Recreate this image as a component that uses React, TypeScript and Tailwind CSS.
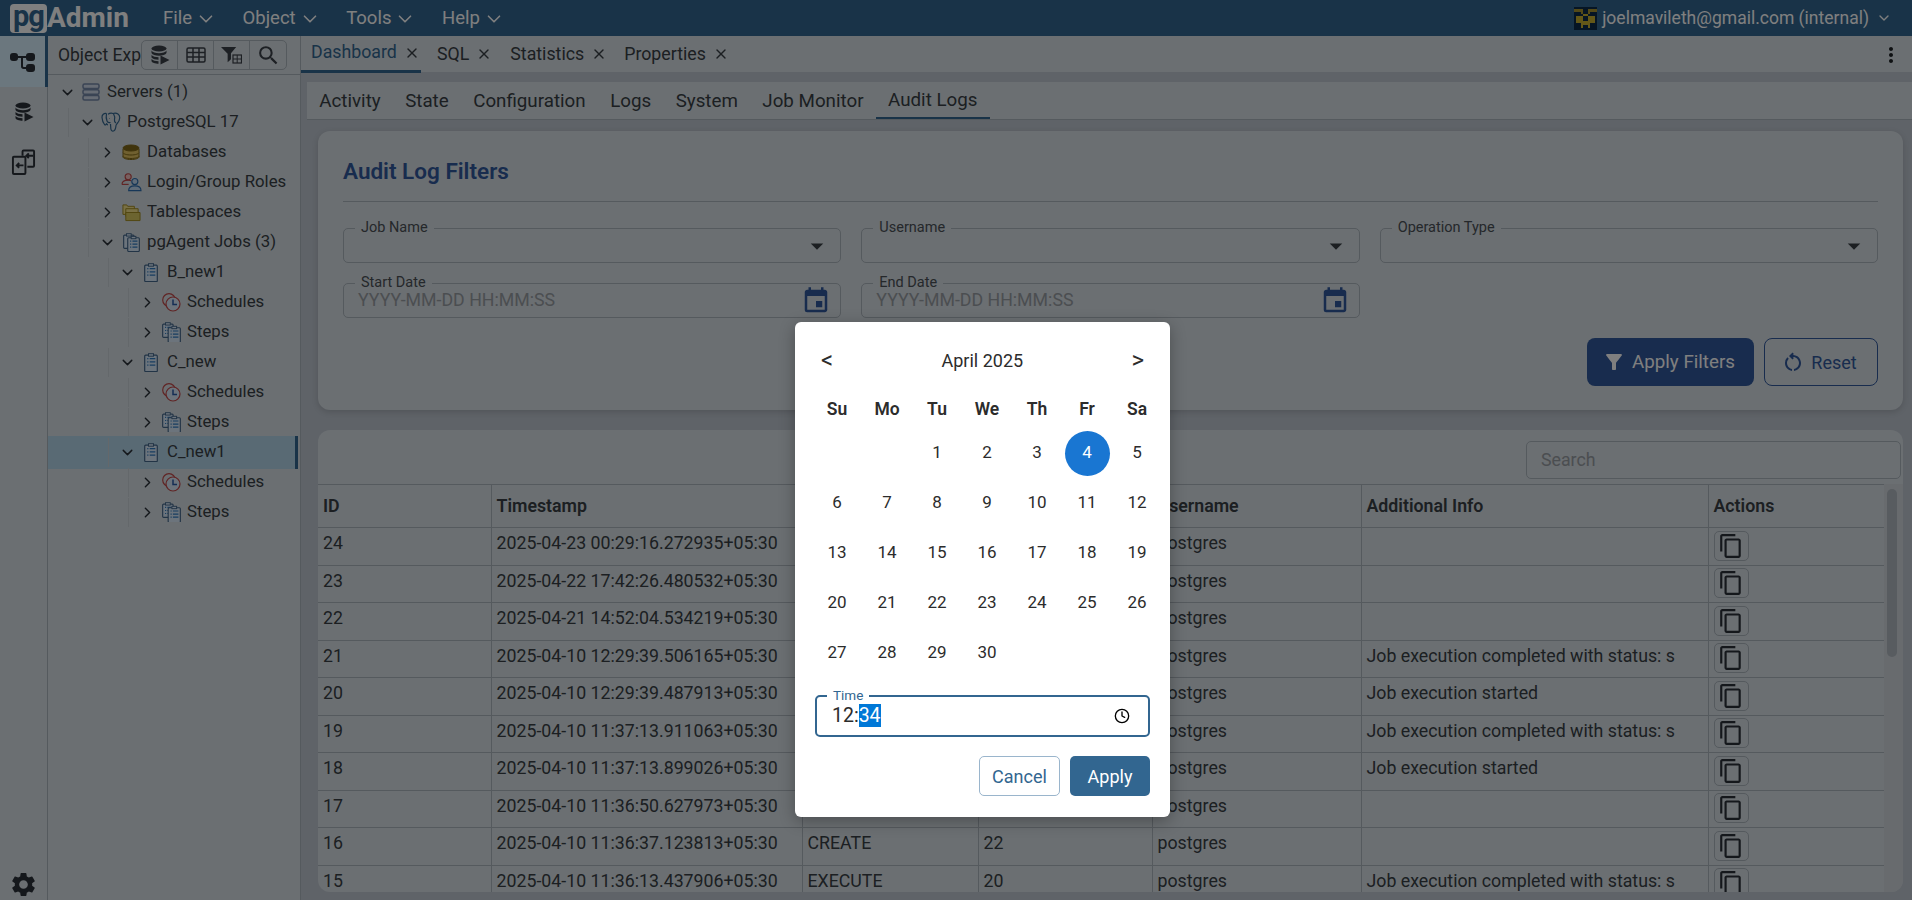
import React from "react";
import { X, ChevronDown, ChevronRight, Clock } from "lucide-react";
import { MdContentCopy, MdEvent, MdFilterAlt, MdArrowDropDown, MdSettings, MdMoreVert, MdSearch, MdOutlineRestartAlt } from "react-icons/md";

const DbPlay = ({ className = "" }: { className?: string }) => (
  <svg viewBox="0 0 20 20" className={className} fill="currentColor">
    <ellipse cx="9" cy="3.5" rx="7.5" ry="3" />
    <path d="M1.5 5.5c1 2 4 2.7 7.5 2.7s6.500-.7 7.500-2.700V8c-1 1.800-4 2.700-7.500 2.700S2.500 9.800 1.500 8z" />
    <path d="M1.500 10c1.500 1.500 4 2.200 7 2.200v2.500c-3 0-5.500-.7-7-2.200zM1.500 14c1.500 1.500 4 2.200 7 2.200v2.500c-3 0-7-1-7-2.700z" />
    <path d="M10.500 10.500l9 4.500-9 4.500z" />
  </svg>
);
const TreeRail = () => (
  <svg viewBox="0 0 26 24" className="w-[26px] h-[24px]" fill="currentColor">
    <rect x="0" y="3" width="8" height="8" rx="3" />
    <rect x="16" y="3" width="9" height="8" rx="3" />
    <rect x="16" y="14" width="9" height="8" rx="3" />
    <path d="M7 6h10v2H13v8c0 .6.400 1 1 1h3v2h-3.500c-1.500 0-2.500-1-2.500-2.500V8H7z" />
  </svg>
);
const CompareRail = () => (
  <svg viewBox="0 0 26 28" className="w-[25px] h-[27px]" fill="none" stroke="currentColor" strokeWidth="2">
    <path d="M12 7V2.500c0-.6.400-1 1-1h10c.6 0 1 .4 1 1v15c0 .6-.4 1-1 1h-6" />
    <rect x="2" y="8" width="13" height="18" rx="1" />
    <path d="M23 7h-7M18.500 4.500L16 7l2.500 2.500M13 17H6M8.500 14.500L6 17l2.500 2.500" />
  </svg>
);
const ServersIcon = () => (
  <svg viewBox="0 0 18 18" className="w-[18px] h-[18px]" fill="none" stroke="#7488a8" strokeWidth="1.500">
    <rect x="1" y="1" width="16" height="4.500" rx="1.500" fill="#cfd8e8" />
    <rect x="1" y="6.800" width="16" height="4.500" rx="1.500" fill="#cfd8e8" />
    <rect x="1" y="12.500" width="16" height="4.500" rx="1.500" fill="#cfd8e8" />
  </svg>
);
const Elephant = () => (
  <svg viewBox="0 0 20 20" className="w-[20px] h-[20px]" fill="none" stroke="#336791" strokeWidth="1.200" strokeLinejoin="round">
    <path d="M5.500 1.500C3 1 .8 2.500 1 5.500c.2 2.500 1.300 5.500 2.500 7 1 1 1.800.2 2-1 .3 1 1 1.400 1.500 1.400" />
    <path d="M7 2.200C8.500 1.200 10.500 1 12 1.500 16 .4 19 2.500 18.700 6c-.2 2.500-1.500 4.500-2.500 5.500-.5.500-1 1-1.200 2-.3 2.500-.5 5-2.500 5.500-1.500.3-2.500-.5-2.700-2.500-.1-1.500-.2-3-.3-4.500" />
    <path d="M5.500 1.500C5 4 5 6.500 6 9c.6 1.500 2 2 3.500 1.500M12.500 1.800c1 1.700 1.500 3.700 1 5.700-.3 1.500-.2 2.500 1.500 3.500M8.500 6.500h.5" />
  </svg>
);
const DbIcon = () => (
  <svg viewBox="0 0 18 16" className="w-[18px] h-[16px]" fill="#e0c060" stroke="#806818" strokeWidth="1">
    <path d="M1 12v1c0 1.300 3.500 2.500 8 2.500s8-1.200 8-2.500v-1" />
    <path d="M1 8.500v3.500c0 1.300 3.500 2.500 8 2.500s8-1.200 8-2.500V8.500" />
    <path d="M1 5v3.500c0 1.300 3.500 2.500 8 2.500s8-1.200 8-2.500V5" />
    <ellipse cx="9" cy="4" rx="8" ry="3" fill="#806818" />
  </svg>
);
const RolesIcon = () => (
  <svg viewBox="0 0 22 20" className="w-[21px] h-[19px]" fill="none" strokeWidth="1.200">
    <g stroke="#c04848">
      <circle cx="7.500" cy="4" r="3.200" fill="#f0c0c0" />
      <path d="M1 12c0-3 2-4.500 6.500-4.500 1.500 0 2.500.2 3.300.6" />
      <path d="M1 12h7" />
    </g>
    <g stroke="#2f6fb0">
      <circle cx="14.500" cy="9" r="3.200" fill="#c0d8f0" />
      <path d="M8 18.500c0-3.500 2.500-5 6.500-5s6.500 1.500 6.500 5z" fill="#c0d8f0" />
    </g>
  </svg>
);
const FoldersIcon = () => (
  <svg viewBox="0 0 20 20" className="w-[19px] h-[19px]" fill="#f2e08a" stroke="#a08a20" strokeWidth="1">
    <path d="M1 2h4l1 1.500h7V12H1z" />
    <path d="M4 6h13v8H4z" />
    <path d="M4 10h15v8.500H4z" fill="#d8c860" />
  </svg>
);
const Clip = ({ x = 0, y = 0, w = 12, h = 14, dots = true }: { x?: number; y?: number; w?: number; h?: number; dots?: boolean }) => (
  <g>
    <rect x={x} y={y + 1.500} width={w} height={h} rx="1" fill="#d8e8f8" stroke="#45688c" strokeWidth="1.200" />
    <rect x={x + w / 2 - 2.500} y={y} width="5" height="2.500" fill="#d8e8f8" stroke="#45688c" strokeWidth="1" />
    {dots && [0, 1, 2].map((i) => (
      <path key={i} d={`M${x + 2.500} ${y + 5 + i * 3.200}h1.200M${x + 5} ${y + 5 + i * 3.200}h${w - 7}`} stroke="#2f7ac0" strokeWidth="1.200" />
    ))}
  </g>
);
const JobsIcon = () => (
  <svg viewBox="0 0 18 20" className="w-[17px] h-[19px]">
    <Clip x={0.700} y={0.700} w={11} h={14} dots={false} />
    <Clip x={5} y={3.500} w={12.300} h={14.500} />
  </svg>
);
const JobIcon = () => (
  <svg viewBox="0 0 14 19" className="w-[14px] h-[19px]">
    <Clip x={0.700} y={0.700} w={12.600} h={16.500} />
  </svg>
);
const ScheduleIcon = () => (
  <svg viewBox="0 0 19 19" className="w-[19px] h-[19px]" fill="none">
    <circle cx="7" cy="7" r="6.300" stroke="#c04848" strokeWidth="1.200" />
    <circle cx="11" cy="11" r="7" stroke="#c04848" strokeWidth="1.200" fill="#d8e8f8" />
    <path d="M11 6.500V11.500H15" stroke="#2a5ca8" strokeWidth="1.500" />
  </svg>
);
const StepsIcon = () => (
  <svg viewBox="0 0 20 21" className="w-[19px] h-[20px]">
    <Clip x={0.700} y={0.700} w={11} h={14} />
    <Clip x={6.500} y={4.500} w={12.800} h={15.500} />
  </svg>
);
const TableIcon = () => (
  <svg viewBox="0 0 20 16" className="w-[20px] h-[16px]" fill="none" stroke="#3a4048" strokeWidth="1.500">
    <rect x="1" y="1" width="18" height="14" rx="1.500" />
    <path d="M1 5.500h18M1 10h18M7 1v14M13 1v14" />
  </svg>
);
const FilterTable = () => (
  <svg viewBox="0 0 21 17" className="w-[21px] h-[17px]" fill="#3a4048">
    <path d="M0 0h16l-5.500 6.500V13L7 16V7z" transform="scale(.95)" />
    <rect x="12" y="8" width="8.500" height="8" fill="none" stroke="#3a4048" strokeWidth="1.200" />
    <path d="M12 12h8.500M16.200 8v8" stroke="#3a4048" strokeWidth="1" />
  </svg>
);
const Avatar = () => (
  <svg viewBox="0 0 10 10" className="w-[23px] h-[23px]" shapeRendering="crispEdges">
    <rect width="10" height="10" fill="#0c2a48" />
    <path d="M0 1h3v1H0zM7 1h3v1H7zM3 1h1v2h2V1h1v2H3z" fill="#a89430" />
    <path d="M1 4h3V3h2v1h3v3H7v1H3V7H1zM3 9h1V8H3zM6 9h1V8H6z" fill="#c8b030" />
    <path d="M4 4h2v2H4z" fill="#0c2a48" />
  </svg>
);

const tree: [number, boolean, string, React.ReactNode, string?][] = [
  [0, true, "Servers", <ServersIcon />, "(1)"],
  [1, true, "PostgreSQL 17", <Elephant />],
  [2, false, "Databases", <DbIcon />],
  [2, false, "Login/Group Roles", <RolesIcon />],
  [2, false, "Tablespaces", <FoldersIcon />],
  [2, true, "pgAgent Jobs", <JobsIcon />, "(3)"],
  [3, true, "B_new1", <JobIcon />],
  [4, false, "Schedules", <ScheduleIcon />],
  [4, false, "Steps", <StepsIcon />],
  [3, true, "C_new", <JobIcon />],
  [4, false, "Schedules", <ScheduleIcon />],
  [4, false, "Steps", <StepsIcon />],
  [3, true, "C_new1", <JobIcon />],
  [4, false, "Schedules", <ScheduleIcon />],
  [4, false, "Steps", <StepsIcon />],
];
const indent = ["pl-[7px]", "pl-[27px]", "pl-[47px]", "pl-[67px]", "pl-[87px]"];
const guide = ["hidden", "left-[20px]", "left-[40px]", "left-[60px]", "left-[80px]"];

const rows = [
  ["24", "2025-04-23 00:29:16.272935+05:30", "CREATE", "29", "postgres", ""],
  ["23", "2025-04-22 17:42:26.480532+05:30", "CREATE", "28", "postgres", ""],
  ["22", "2025-04-21 14:52:04.534219+05:30", "CREATE", "27", "postgres", ""],
  ["21", "2025-04-10 12:29:39.506165+05:30", "EXECUTE", "26", "postgres", "Job execution completed with status: s"],
  ["20", "2025-04-10 12:29:39.487913+05:30", "EXECUTE", "26", "postgres", "Job execution started"],
  ["19", "2025-04-10 11:37:13.911063+05:30", "EXECUTE", "25", "postgres", "Job execution completed with status: s"],
  ["18", "2025-04-10 11:37:13.899026+05:30", "EXECUTE", "25", "postgres", "Job execution started"],
  ["17", "2025-04-10 11:36:50.627973+05:30", "CREATE", "23", "postgres", ""],
  ["16", "2025-04-10 11:36:37.123813+05:30", "CREATE", "22", "postgres", ""],
  ["15", "2025-04-10 11:36:13.437906+05:30", "EXECUTE", "20", "postgres", "Job execution completed with status: s"],
];

const Field = ({ label, date }: { label: string; date?: boolean }) => (
  <div className="relative h-[35px] rounded-[5px] border border-[#aab4bc] flex items-center justify-between pl-[14px] pr-[9px]">
    <span className="absolute left-[11px] -top-[9px] px-[6px] bg-[#d6dee4] text-[14.500px] leading-[16px] text-[#4a5056]">{label}</span>
    {date ? (
      <>
        <span className="text-[17.750px] text-[#969ca2]">YYYY-MM-DD HH:MM:SS</span>
        <MdEvent className="w-[30px] h-[30px] text-[#30589c]" />
      </>
    ) : (
      <>
        <span />
        <MdArrowDropDown className="w-[30px] h-[30px] -mr-[1px] text-[#383e44]" />
      </>
    )}
  </div>
);

const weeks = [
  ["", "", 1, 2, 3, 4, 5],
  [6, 7, 8, 9, 10, 11, 12],
  [13, 14, 15, 16, 17, 18, 19],
  [20, 21, 22, 23, 24, 25, 26],
  [27, 28, 29, 30, "", "", ""],
];

export default function App() {
  return (
    <div className="relative h-[900px] w-full overflow-hidden flex flex-col [font-family:Roboto,sans-serif] text-[17.750px] text-[#383e44] bg-[#bec6d0]">
      <header className="h-[36px] shrink-0 bg-[#326690] flex items-center text-white">
        <div className="ml-[10px] w-[120px] flex items-center h-[30px]">
          <span className="h-[29px] w-[37px] rounded-[4px] bg-white text-[#326690] font-bold text-[29px] leading-[24px] text-center tracking-[-1px]">pg</span>
          <span className="font-bold text-[28px] leading-[30px]">Admin</span>
        </div>
        <nav className="flex ml-[33px] mt-[2px] gap-[25.500px] text-[18.500px]">
          {["File", "Object", "Tools", "Help"].map((m) => (
            <span key={m} className="flex items-center gap-[3px]">
              {m}
              <ChevronDown className="w-[22px] h-[22px]" strokeWidth={1.8} />
            </span>
          ))}
        </nav>
        <div className="ml-auto flex items-center pr-[20px] gap-[5px] text-[17.500px]">
          <Avatar />
          <span>joelmavileth@gmail.com (internal)</span>
          <ChevronDown className="w-[16px] h-[16px] ml-[2px]" strokeWidth={2} />
        </div>
      </header>

      <div className="flex-1 flex min-h-0">
        <aside className="w-[48px] shrink-0 bg-[#d6dee4] border-r border-[#aab4bc] flex flex-col text-[#2a3038]">
          <div className="h-[51px] bg-[#d6effc] border-r-[3px] border-[#326690] flex items-center justify-center -mr-px">
            <TreeRail />
          </div>
          <div className="h-[50px] flex items-center justify-center"><DbPlay className="w-[20px] h-[20px]" /></div>
          <div className="h-[50px] flex items-center justify-center"><CompareRail /></div>
          <MdSettings className="mt-auto mb-[1px] mx-auto w-[29px] h-[29px]" />
        </aside>

        <section className="w-[253px] shrink-0 bg-[#d6dee4] border-r border-[#aab4bc] flex flex-col">
          <div className="h-[39px] shrink-0 relative border-b border-[#aab4bc] pl-[10px] flex items-center overflow-hidden text-[17.500px]">
            <span className="whitespace-nowrap">Object Explorer</span>
            <div className="absolute left-[93px] top-[4px] h-[30px] w-[146px] grid grid-cols-4 rounded-[5px] border border-[#aab4bc] bg-[#d6dee4] divide-x divide-[#aab4bc] text-[#3a4048]">
              <span className="flex items-center justify-center"><DbPlay className="w-[20px] h-[20px]" /></span>
              <span className="flex items-center justify-center"><TableIcon /></span>
              <span className="flex items-center justify-center"><FilterTable /></span>
              <span className="flex items-center justify-center"><MdSearch className="w-[25px] h-[25px]" /></span>
            </div>
          </div>
          <div className="flex-1 pt-[2px] text-[16.800px]">
            {tree.map(([d, open, name, icon, extra], i) => (
              <div key={i} className={`relative h-[30px] flex items-center ${indent[d]}`}>
                {name === "C_new1" && <span className="absolute inset-x-0 -top-[1px] h-[33px] bg-[#b2d4e8] border-r-[3px] border-[#326690] mr-[2px]" />}
                <span className={`absolute top-[1px] h-[29px] w-px bg-[#c8d0d6] ${guide[d]}`} />
                <span className="relative w-[24px] flex justify-center shrink-0">
                  {open ? <ChevronDown className="w-[17px] h-[17px] text-[#2a3038]" /> : <ChevronRight className="w-[17px] h-[17px] text-[#2a3038]" />}
                </span>
                <span className="relative w-[24px] flex justify-center shrink-0">{icon}</span>
                <span className="relative ml-[4px] whitespace-nowrap">{name}{extra && <span className="ml-[4px]">{extra}</span>}</span>
              </div>
            ))}
          </div>
        </section>

        <main className="flex-1 min-w-0 flex flex-col">
          <div className="h-[38px] shrink-0 bg-[#d6dee4] border-b-2 border-[#bec6d0] flex items-center relative">
            <div className="flex h-[38px] items-center">
              <div className="w-[120px] h-[38px] border-b-[3px] border-[#326690] flex items-center pl-[10px] text-[#326690]">
                Dashboard<X className="w-[16px] h-[16px] ml-[7px] text-[#383e44]" />
              </div>
              <div className="flex items-center ml-[16px]">SQL<X className="w-[16px] h-[16px] ml-[7px]" /></div>
              <div className="flex items-center ml-[18px]">Statistics<X className="w-[16px] h-[16px] ml-[7px]" /></div>
              <div className="flex items-center ml-[17px]">Properties<X className="w-[16px] h-[16px] ml-[7px]" /></div>
            </div>
            <MdMoreVert className="absolute right-[9px] top-[7px] w-[24px] h-[24px] text-[#1c2024]" />
          </div>

          <div className="flex-1 min-h-0 pl-[6px] pt-[8px] flex flex-col">
            <div className="h-[38px] shrink-0 bg-[#d6dee4] border-b border-[#aab4bc] flex items-stretch text-[18.750px]">
              {["Activity", "State", "Configuration", "Logs", "System", "Job Monitor", "Audit Logs"].map((t) => (
                <div key={t} className={`px-[12.250px] pt-[1px] flex items-center ${t === "Audit Logs" ? "border-b-2 border-[#326690]" : ""}`}>{t}</div>
              ))}
            </div>
            <div className="flex-1 min-h-0 pl-[11px] pr-[9px] pt-[11px] pb-[8px] flex flex-col gap-[20px]">
              <div className="h-[279px] shrink-0 rounded-[12px] bg-[#d6dee4] px-[25px] shadow-[0_2px_6px_rgba(0,0,0,0.15)]">
                <h2 className="h-[71px] border-b border-[#aab4bc] flex items-center pt-[12px] text-[#30589c] text-[22.500px] font-semibold">Audit Log Filters</h2>
                <div className="grid grid-cols-3 gap-x-[20px] gap-y-[20px] mt-[26px]">
                  <Field label="Job Name" />
                  <Field label="Username" />
                  <Field label="Operation Type" />
                  <Field label="Start Date" date />
                  <Field label="End Date" date />
                </div>
                <div className="flex justify-end gap-[10px] mt-[20px]">
                  <button className="w-[167px] h-[48px] rounded-[8px] bg-[#30589c] text-white flex items-center justify-center gap-[6px] pr-[4px] text-[18.750px]">
                    <MdFilterAlt className="w-[24px] h-[24px]" />Apply Filters
                  </button>
                  <button className="w-[114px] h-[48px] rounded-[8px] border border-[#30589c] text-[#30589c] flex items-center justify-center gap-[6px] pr-[4px] text-[18px]">
                    <MdOutlineRestartAlt className="w-[24px] h-[24px]" />Reset
                  </button>
                </div>
              </div>

              <div className="flex-1 min-h-0 rounded-[12px] bg-[#d6dee4] overflow-hidden flex flex-col">
                <div className="h-[54px] shrink-0 flex justify-end items-center pr-[2px] pt-[6px]">
                  <div className="w-[375px] h-[38px] rounded-[5px] border border-[#aab4bc] flex items-center pl-[14px] text-[#969ca2]">Search</div>
                </div>
                <div className="relative flex-1 min-h-0 overflow-hidden">
                  <table className="w-[1566px] table-fixed border-collapse">
                    <colgroup>
                      <col className="w-[173px]" /><col className="w-[311px]" /><col className="w-[176px]" /><col className="w-[174px]" /><col className="w-[209px]" /><col className="w-[347px]" /><col className="w-[176px]" />
                    </colgroup>
                    <thead>
                      <tr className="h-[43px]">
                        {["ID", "Timestamp", "Operation", "Job ID", "Username", "Additional Info", "Actions"].map((h) => (
                          <th key={h} className="border border-[#aab4bc] border-l-0 px-[5px] text-left font-semibold">{h}</th>
                        ))}
                      </tr>
                    </thead>
                    <tbody>
                      {rows.map((r) => (
                        <tr key={r[0]} className="h-[37.500px]">
                          {r.map((c, i) => (
                            <td key={i} className="border border-[#aab4bc] border-l-0 px-[5px] pb-[5px] whitespace-nowrap overflow-hidden">{c}</td>
                          ))}
                          <td className="border border-[#aab4bc] border-l-0 px-[5px]">
                            <span className="w-[35px] h-[30px] -mt-[1px] rounded-[5px] border border-[#aab4bc] flex items-center justify-center">
                              <MdContentCopy className="w-[26px] h-[26px] text-[#2a3038]" />
                            </span>
                          </td>
                        </tr>
                      ))}
                    </tbody>
                  </table>
                  <div className="absolute right-0 top-0 bottom-0 w-[19px] bg-[#d0d6dc]">
                    <span className="absolute left-[3px] top-[5px] h-[168px] w-[10px] rounded-[5px] bg-[#b0b8c0] block" />
                  </div>
                </div>
              </div>
            </div>
          </div>
        </main>
      </div>

      <div className="absolute inset-0 bg-black/50" />

      <div className="absolute left-[795px] top-[322px] w-[375px] h-[495px] bg-white rounded-[6px] shadow-[0_4px_16px_rgba(0,0,0,0.3)] px-[20px] text-[#2c2c2c] text-[18px]">
        <div className="h-[76px] flex items-center justify-between px-[6px]">
          <span className="text-[24px] leading-none">&lt;</span>
          <span>April 2025</span>
          <span className="text-[24px] leading-none">&gt;</span>
        </div>
        <div className="grid grid-cols-7 w-[350px] -ml-[3px] h-[20px] -mt-[2px] items-center text-center font-semibold text-[17.500px]">
          {["Su", "Mo", "Tu", "We", "Th", "Fr", "Sa"].map((d) => <span key={d}>{d}</span>)}
        </div>
        <div className="grid grid-cols-7 grid-rows-5 w-[350px] -ml-[3px] h-[250px] mt-[12px] text-center text-[17px]">
          {weeks.flat().map((d, i) => (
            <span key={i} className="flex items-center justify-center">
              {d === 4 ? <span className="w-[45px] h-[45px] rounded-full bg-[#1976d2] text-white flex items-center justify-center">4</span> : d}
            </span>
          ))}
        </div>
        <div className="relative mt-[17px] h-[42px] rounded-[5px] border-2 border-[#326690] flex items-center justify-between pl-[15px] pr-[18px] text-[19.500px]">
          <span className="absolute left-[10px] -top-[9px] px-[6px] bg-white text-[#326690] text-[13.500px] leading-[14px]">Time</span>
          <span>12:<span className="bg-[#0078d7] text-white">34</span></span>
          <Clock className="w-[16px] h-[16px] text-black" strokeWidth={2} />
        </div>
        <div className="flex justify-end gap-[10px] mt-[19px] text-[18px]">
          <button className="w-[81px] h-[40px] rounded-[5px] border border-[#9ab5cc] text-[#326690]">Cancel</button>
          <button className="w-[80px] h-[40px] rounded-[5px] bg-[#326690] text-white">Apply</button>
        </div>
      </div>
    </div>
  );
}
